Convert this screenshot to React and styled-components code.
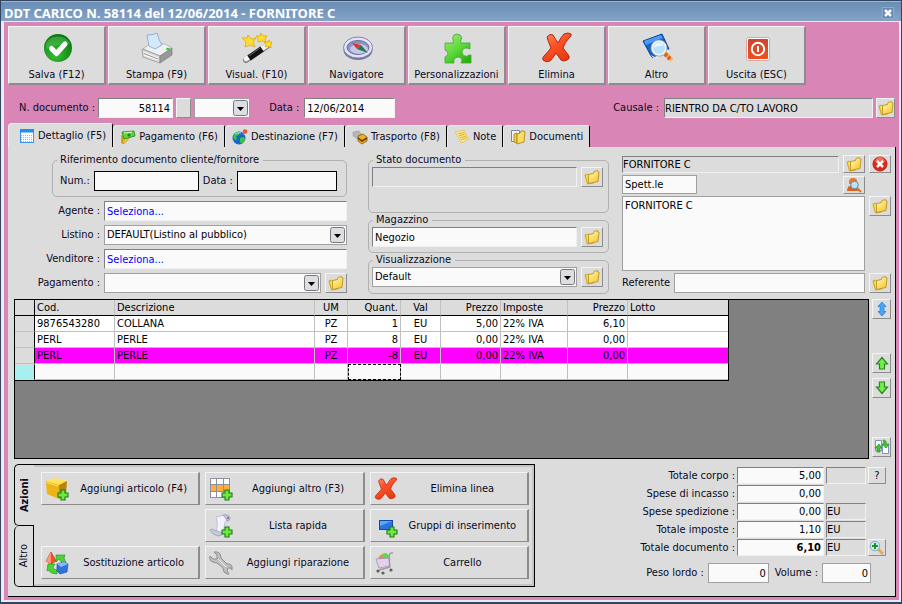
import React, { useState } from "react";
import styled, { createGlobalStyle, css } from "styled-components";

const font = '"DejaVu Sans Condensed", "DejaVu Sans", Verdana, sans-serif';

const GlobalStyle = createGlobalStyle`
  * {
    box-sizing: border-box;
  }
  body {
    margin: 0;
    background: #dcdcdc;
    color: #0a0a1e;
    font: 11px/14px ${font};
  }
  button, input, select, textarea {
    margin: 0;
    color: inherit;
    font: inherit;
  }
`;

/* ---------- icons ---------- */

const CheckIcon = () => (
  <svg width="32" height="32" viewBox="0 0 32 32">
    <defs>
      <radialGradient id="chk" cx=".4" cy=".75" r=".8">
        <stop offset="0" stopColor="#35c235" />
        <stop offset="1" stopColor="#08700f" />
      </radialGradient>
    </defs>
    <circle cx="17" cy="16" r="14" fill="url(#chk)" />
    <path d="M5 12a13 12 0 0 1 24 0q-12 0-24 5z" fill="#6cd06c" opacity=".4" />
    <path
      d="M10.500 16.500l5 5L24 12"
      fill="none"
      stroke="#fff"
      strokeWidth="5"
      strokeLinecap="round"
      strokeLinejoin="round"
    />
  </svg>
);

const PrinterIcon = () => (
  <svg width="32" height="32" viewBox="0 0 32 32">
    <path d="M2 17l8-6 14 1 7 4-12 8z" fill="#f0f0f0" stroke="#a0a0a0" strokeWidth=".7" />
    <path d="M8 14L6 3q7 0 10-2 2 8 5 12l-7 4z" fill="#d5e9fb" stroke="#7aa5d0" strokeWidth=".8" />
    <path d="M1 17l18 7v7L2 25z" fill="#dcdcde" stroke="#8c8c8c" strokeWidth=".7" />
    <path d="M19 24l12-8v7l-12 8z" fill="#98989c" stroke="#808080" strokeWidth=".7" />
    <path d="M3 20.500l14 5.500M3 23l14 5" stroke="#fff" />
    <path d="M3 21.500l14 5.500" stroke="#777" strokeWidth=".7" />
    <ellipse cx="27" cy="17" rx="2" ry="1.300" fill="#3cd03c" />
  </svg>
);

const WandIcon = () => (
  <svg width="32" height="32" viewBox="0 0 32 32">
    <path d="M5 28L26 14" stroke="#888" strokeWidth="6" strokeLinecap="round" />
    <path d="M5 27L25 14" stroke="#f4f4f4" strokeWidth="4.500" strokeLinecap="round" />
    <path d="M8 26L21 17" stroke="#111" strokeWidth="6" />
    <path d="M8 24l11-8" stroke="#666" />
    <g fill="#ffdc32" stroke="#d8a010" strokeWidth=".7">
      <path d="M7 3l3 4 5-1-3 4 2 5-5-2-5 2 1-5-4-4 5 0z" />
      <path d="M20 1l2 3 4 0-2 3 1 3-4-1-4 1 0-3-2-3 4 0z" />
      <path d="M28 8l1 2 2 0-1 3 0 3-3-2-3 1 1-3-2-2 4 0z" />
    </g>
  </svg>
);

const CompassIcon = () => (
  <svg width="32" height="32" viewBox="0 0 32 32">
    <ellipse cx="17" cy="18" rx="14.500" ry="10" fill="#74749f" />
    <ellipse cx="17" cy="15.500" rx="14.500" ry="10.500" fill="#e2e2f8" stroke="#8484b5" />
    <ellipse cx="17" cy="15.500" rx="11" ry="7" fill="#9090bf" stroke="#6e6ea0" />
    <ellipse cx="18" cy="17" rx="9" ry="5" fill="#c6c6e8" />
    <path d="M11 11l9 2-4 4z" fill="#e03424" />
    <path d="M20 13l7 8-11-4z" fill="#1c7a50" />
  </svg>
);

const PuzzleIcon = () => (
  <svg width="32" height="32" viewBox="0 0 32 32">
    <defs>
      <linearGradient id="pz" x1="0" y1="0" x2=".7" y2="1">
        <stop offset="0" stopColor="#a2ec78" />
        <stop offset=".6" stopColor="#58d838" />
        <stop offset="1" stopColor="#2db010" />
      </linearGradient>
    </defs>
    <path
      d="M4 11h8q1-1 0-3-1-3 1-5 3-2 6 0 3 2 1 5-1 2 0 3h9v6q-2-1-5-1-3 1-3 4t3 4q2 1 4-1h2v8H20q2-3 0-5-3-2-6 0-2 2-1 5H4v-6q2-1 3-3 0-3-3-4z"
      fill="url(#pz)"
      stroke="#42a82b"
      strokeWidth=".8"
      strokeLinejoin="round"
    />
  </svg>
);

const CrossIcon = ({ size = 32 }) => (
  <svg width={size} height={size} viewBox="0 0 32 32">
    <defs>
      <linearGradient id="crs" x1="0" y1="0" x2=".6" y2="1">
        <stop offset="0" stopColor="#ff8f68" />
        <stop offset=".5" stopColor="#fc5028" />
        <stop offset="1" stopColor="#e83c10" />
      </linearGradient>
    </defs>
    <path
      d="M6 5q3-4 6-2 3 5 5 8 3-6 6-9 4-2 7 0 1 2-2 4-4 4-6 10 4 5 6 8 1 3-2 4-4 2-6 0l-5-7q-3 5-6 8-4 2-7-1-1-2 1-4 4-4 7-8Q7 9 6 5z"
      fill="url(#crs)"
      stroke="#b92408"
      strokeLinejoin="round"
    />
  </svg>
);

const BookIcon = () => (
  <svg width="32" height="32" viewBox="0 0 32 32">
    <path d="M2 9L21 2l7 15-14 9q-4 0-5-4z" fill="#1565d0" stroke="#0a3f96" />
    <path d="M3 9L20 3l2 3L5 13z" fill="#4a9cf5" />
    <path d="M9 23l5 2 13-8 1 2-14 8z" fill="#f0f0f0" />
    <path d="M23 20l8 8" stroke="#f5b060" strokeWidth="4" />
    <path d="M24 22l2 2M27 25l2 2" stroke="#d86020" strokeWidth="4" />
    <circle cx="18" cy="16" r="7" fill="#b6e0fb" stroke="#f2f2f2" strokeWidth="2" />
    <circle cx="18" cy="16" r="8.200" fill="none" stroke="#7a8a9a" strokeWidth=".7" />
    <path d="M13 16q0-5 5-5 4 0 4 3-5-1-9 2z" fill="#fff" opacity=".7" />
  </svg>
);

const PowerIcon = () => (
  <svg width="32" height="32" viewBox="0 0 32 32">
    <defs>
      <linearGradient id="pw" x1="0" y1="0" x2="0" y2="1">
        <stop offset="0" stopColor="#cc4432" />
        <stop offset="1" stopColor="#f0501c" />
      </linearGradient>
    </defs>
    <rect x="5.500" y="5.500" width="23" height="23" rx="2" fill="#fff" stroke="#d8a8a0" />
    <rect x="7" y="7" width="20" height="20" rx="1" fill="url(#pw)" />
    <circle cx="17" cy="17" r="6.200" fill="none" stroke="#fff" strokeWidth="2" />
    <path d="M17 14v6" stroke="#fff" strokeWidth="2" />
  </svg>
);

const FolderIcon = () => (
  <svg width="16" height="16" viewBox="0 0 16 16">
    <defs>
      <linearGradient id="fld" x1="0" y1="0" x2=".8" y2="1">
        <stop offset="0" stopColor="#fffac0" />
        <stop offset="1" stopColor="#f4c828" />
      </linearGradient>
    </defs>
    <path d="M1 6l2.500-1 1 1 5-1v9l-6 1z" fill="#f7dc50" stroke="#c89a1c" strokeWidth=".9" />
    <path d="M4.500 5.500l5-1 .5-2 3.500-1 .5 1.500 1 0-1 9.500-9.500 2z" fill="url(#fld)" stroke="#c2921a" strokeWidth=".9" />
  </svg>
);

const RedXIcon = () => (
  <svg width="16" height="16" viewBox="0 0 16 16">
    <circle cx="8" cy="8" r="7" fill="#e0281a" stroke="#b82010" />
    <path d="M3 6a5 5 0 0 1 10 0q-5-1-10 0z" fill="#ff8a70" opacity=".7" />
    <path d="M5 5l6 6M11 5l-6 6" stroke="#fff" strokeWidth="2.500" />
  </svg>
);

const UserSearchIcon = () => (
  <svg width="16" height="16" viewBox="0 0 16 16">
    <path d="M3 5q0-4 4-4t4 3v3H3z" fill="#e67828" />
    <path d="M1 14q0-6 6-6 5 0 6 6z" fill="#df5f1f" />
    <path d="M11 11l4 4" stroke="#d07828" strokeWidth="2" />
    <circle cx="8.500" cy="8" r="3.800" fill="#b8e2fa" stroke="#5a8fb4" />
  </svg>
);

const CalendarIcon = () => (
  <svg width="16" height="16" viewBox="0 0 16 16">
    <rect x="1.500" y="1.500" width="13" height="13" fill="#fff" stroke="#3a94ee" />
    <path d="M1 1h14v3.500H1z" fill="#1e8df5" />
    <path d="M2 7.500h12M2 9.500h12M2 11.500h12M2 13.500h12" stroke="#9cb2e0" strokeDasharray="1 1" />
  </svg>
);

const MoneyIcon = () => (
  <svg width="16" height="16" viewBox="0 0 16 16">
    <path d="M1 6l3 1-1 8-2-1z" fill="#e8a020" />
    <path d="M3 7l7 1-4 5-3 2z" fill="#f5c52a" stroke="#b07a10" strokeWidth=".5" />
    <path d="M2 3l12-1 1 5-11 3z" fill="#5fd53e" stroke="#1b8a1b" strokeWidth=".8" />
    <path d="M4 4l8-1" stroke="#d5ffc0" />
    <circle cx="9" cy="6" r="1.500" fill="#178a20" />
  </svg>
);

const GlobeIcon = () => (
  <svg width="16" height="16" viewBox="0 0 16 16">
    <circle cx="7" cy="9" r="6.500" fill="#1768cc" />
    <path d="M2 6q3-4 6-3l-1 3-3 1 1 3-2 1-2-3zM8 9l4-1 1 3-3 4-2-2z" fill="#3cc43c" />
    <path d="M3 5q3-2 6-1" stroke="#9ae0f5" fill="none" />
    <path d="M11 6l2-3" stroke="#888" />
    <circle cx="13" cy="2.500" r="2.300" fill="#f0502e" />
  </svg>
);

const TransportIcon = () => (
  <svg width="16" height="16" viewBox="0 0 16 16">
    <path d="M1 3l6-1 3 4-4 4-5-3z" fill="#b5b5b5" stroke="#999" strokeWidth=".5" />
    <path d="M6 7l5-2 4 3v4l-5 3-4-3z" fill="#f7ac1c" stroke="#6b4a10" strokeWidth=".7" />
    <path d="M6 9l4 3 5-3" stroke="#5a4010" strokeWidth="1.500" fill="none" />
  </svg>
);

const NoteIcon = () => (
  <svg width="16" height="16" viewBox="0 0 16 16">
    <path d="M1 3l9-2q2 6 5 9l-8 4q-2-6-6-11z" fill="#fbe88c" stroke="#e0bc50" strokeWidth=".7" />
    <path d="M4 5l6-1.500M5 7l6-2M6 9l6-2M7 11l6-2.500" stroke="#cfa030" strokeWidth=".8" />
  </svg>
);

const DocsIcon = () => (
  <svg width="16" height="16" viewBox="0 0 16 16">
    <path d="M1.500 1.500h8v11h-8z" fill="#eef2fa" stroke="#7888a8" />
    <path d="M4 5l3-1v10l-3-1z" fill="#f5d040" stroke="#a87c10" strokeWidth=".8" />
    <path d="M7 5l3-1 1-2 3 0 1 1-1 10-7 2z" fill="#f8de60" stroke="#a87c10" strokeWidth=".8" />
  </svg>
);

const ArrowIcon = ({ down }) => (
  <svg width="16" height="16" viewBox="0 0 16 16">
    <path
      d={down ? "M5.500 2h5v5h3L8 13.500 2.500 7h3z" : "M5.500 14h5V9h3L8 2.500 2.500 9h3z"}
      fill="#74ee48"
      stroke="#238a1b"
      strokeWidth="1.200"
    />
  </svg>
);

const UpDownIcon = () => (
  <svg width="16" height="16" viewBox="0 0 16 16">
    <path d="M8 1l4 4.500H10v5h2L8 15l-4-4.500h2v-5H4z" fill="#4aa6f5" stroke="#2f80d8" strokeWidth=".8" />
  </svg>
);

const RefreshIcon = () => (
  <svg width="16" height="16" viewBox="0 0 16 16">
    <path d="M1.500 1.500h6v10h-6zM8.500 5.500h6v9h-6z" fill="#fff" stroke="#7d93c4" />
    <path d="M3 13V9H1l4-4 3 4H6v4z" fill="#3ccc2c" stroke="#1b7e18" strokeWidth=".6" />
    <path d="M9 1q4 0 3 4h3l-3 4-4-4h2q0-2-1-4z" fill="#3ccc2c" stroke="#1b7e18" strokeWidth=".6" />
  </svg>
);

const ZoomIcon = () => (
  <svg width="16" height="16" viewBox="0 0 16 16">
    <path d="M9 9l5 5" stroke="#e8a858" strokeWidth="3" />
    <circle cx="6" cy="6" r="4.700" fill="#cfeaf8" stroke="#85aac4" />
    <path d="M6 3v6M3 6h6" stroke="#149a24" strokeWidth="2" />
  </svg>
);

const Plus = () => (
  <path
    d="M16 13h4v3h3v4h-3v3h-4v-3h-3v-4h3z"
    fill="#6fe83c"
    stroke="#1a7a18"
    strokeWidth="1.100"
  />
);

const BoxIcon = () => (
  <svg width="24" height="24" viewBox="0 0 24 24">
    <path d="M1 4l10-3 11 3-8 5z" fill="#ffe35a" />
    <path d="M1 4l13 4v14L2 17z" fill="#ecb414" />
    <path d="M14 8l8-4-1 13-7 5z" fill="#bd8404" />
    <path d="M2 5.500l11 3.500" stroke="#ffec90" />
    <Plus />
  </svg>
);

const TableIcon = () => (
  <svg width="24" height="24" viewBox="0 0 24 24">
    <path d="M1 1h19v19H1z" fill="#fff" />
    <path d="M1 7h19v7H1z" fill="#ffad3d" />
    <path
      d="M1.500 1.500h19v19h-19zM7.500 1.500v19M14.500 1.500v19M1.500 7.500h19M1.500 14.500h19"
      fill="none"
      stroke="#8f8fa0"
    />
    <Plus />
  </svg>
);

const ScrollIcon = () => (
  <svg width="24" height="24" viewBox="0 0 24 24">
    <path d="M7 3l9-2q4 2 2 5l-2 2-2 12-8 0q4-8 1-17z" fill="#f2f2fd" stroke="#b0b0c8" strokeWidth=".7" />
    <path d="M14 1q6-1 7 3 0 3-3 3-1-3-4-6z" fill="#c4c4dc" stroke="#9090b0" strokeWidth=".7" />
    <path d="M1 16q2-2 4 0l9 3q-1 3-5 3-6-1-8-6z" fill="#c9c9dd" stroke="#9494b0" strokeWidth=".7" />
    <circle cx="19" cy="4" r="1.200" fill="#8080a5" />
    <Plus />
  </svg>
);

const GroupIcon = () => (
  <svg width="24" height="24" viewBox="0 0 24 24">
    <rect x="5.500" y="6.500" width="13" height="9" fill="#2a74dc" stroke="#1648a0" />
    <path d="M6 7h12L6 12z" fill="#5da5f5" />
    <Plus />
  </svg>
);

const SwapIcon = () => (
  <svg width="24" height="24" viewBox="0 0 24 24">
    <path d="M6 1l5 9-5 3-5-3z" fill="#f0502a" stroke="#b02c10" strokeWidth=".6" />
    <path d="M6 1l-5 9 5 3z" fill="#ff9878" />
    <path d="M11 4h9l-1 3 2 5h-4l-3-4-3 3z" fill="#4cd436" stroke="#1c8a18" strokeWidth=".6" />
    <path d="M3 13l7 0-2 3q0 3 4 3v4q-6 0-9-4l-1 1z" fill="#4cd436" stroke="#1c8a18" strokeWidth=".6" />
    <path d="M12 13l7-2 4 2-1 8-7 2-3-3z" fill="#2f74d8" stroke="#1648a0" strokeWidth=".6" />
    <path d="M12 13l7-2 4 2-7 3z" fill="#8abaf8" />
  </svg>
);

const WrenchIcon = () => (
  <svg width="24" height="24" viewBox="0 0 24 24">
    <path
      d="M5 1l3 3 0 4-4 0-3-3q-1 5 3 6l4 1 6 5q0 5 4 6l2 0-2-3 1-3 3 0 1 2 0-4q-2-3-5-2l-6-6q0-7-7-6z"
      fill="#c0c0c0"
      stroke="#8e8e8e"
      strokeLinejoin="round"
    />
    <path d="M9 8l8 8" stroke="#ededed" />
  </svg>
);

const CartIcon = () => (
  <svg width="24" height="24" viewBox="0 0 24 24">
    <path d="M5 7q2-5 7-5l4 3-1 4H6z" fill="#64d84a" />
    <circle cx="7" cy="7" r="2.500" fill="#f08a40" />
    <path d="M2 8l14-1-1 8-10 2z" fill="#dcd4f4" stroke="#9a92c0" strokeWidth=".8" />
    <path d="M6 9v7M9 9v7M12 8v7" stroke="#f6c8d0" />
    <path d="M19 2q-4-1-4 5l1 9-11 3" fill="none" stroke="#9a9a9a" strokeWidth="1.300" />
    <g fill="#606060">
      <circle cx="4" cy="20" r="1.600" />
      <circle cx="9" cy="22" r="1.600" />
      <circle cx="17" cy="19" r="1.600" />
    </g>
  </svg>
);

/* ---------- shared controls ---------- */

const raised = css`
  border: 1px solid;
  border-color: #f4f4f4 #8c8c8c #8c8c8c #f4f4f4;
  background: #dcdcdc;
`;

const Button = styled.button`
  ${raised}
  padding: 0;
  &:active {
    border-color: #8c8c8c #f4f4f4 #f4f4f4 #8c8c8c;
  }
`;

const IconButton = styled(Button)`
  display: flex;
  flex: none;
  align-items: center;
  justify-content: center;
  width: ${(pr) => pr.$w || 22}px;
  height: ${(pr) => pr.$h || 20}px;
  svg {
    flex: none;
  }
`;

const looks = {
  sunken: "#808080 #f0f0f0 #f0f0f0 #808080",
  flat: "#a0a0a0",
  black: "#000",
};

const Field = styled.input`
  width: ${(pr) => (pr.$w ? pr.$w + "px" : "100%")};
  flex: ${(pr) => (pr.$w ? "none" : "1")};
  min-width: 0;
  height: ${(pr) => pr.$h || 20}px;
  padding: 0 ${(pr) => (pr.readOnly ? 0 : 2)}px;
  border: 1px solid;
  border-color: ${(pr) => looks[pr.$look || "sunken"]};
  border-radius: 0;
  background: ${(pr) => (pr.readOnly ? "#dcdcdc" : "#fafafa")};
  color: ${(pr) => (pr.$link ? "#0000ff" : "#000")};
  font-weight: ${(pr) => (pr.$bold ? "bold" : "normal")};
  text-align: ${(pr) => (pr.$right ? "right" : "left")};
  outline: none;
`;

const SelectBox = styled.div`
  position: relative;
  flex: ${(pr) => (pr.$w ? "none" : "1")};
  width: ${(pr) => (pr.$w ? pr.$w + "px" : "auto")};
  min-width: 0;
  height: 20px;
  select {
    width: 100%;
    height: 100%;
    padding: 0 20px 0 2px;
    border: 1px solid #a0a0a0;
    border-radius: 0;
    background: #fafafa;
    color: #000;
    appearance: none;
  }
  svg {
    position: absolute;
    top: 2px;
    right: 2px;
    pointer-events: none;
  }
`;

const Select = ({ w, label, id, options }) => (
  <SelectBox $w={w}>
    <select id={id} aria-label={label}>
      {options.map((o) => (
        <option key={o}>{o}</option>
      ))}
    </select>
    <svg width="15" height="16" viewBox="0 0 15 16">
      <rect x=".5" y=".5" width="14" height="15" rx="2" fill="#dedee2" stroke="#77777c" />
      <path d="M4 7h7l-3.500 4z" fill="#000" />
    </svg>
  </SelectBox>
);

const FolderButton = (props) => (
  <IconButton aria-label="Apri" {...props}>
    <FolderIcon />
  </IconButton>
);

/* ---------- window ---------- */

const Window = styled.div`
  display: flex;
  flex-direction: column;
  min-width: 880px;
  min-height: 100vh;
  border: 1px solid #34465f;
  border-bottom-width: 2px;
  background: #e8ecf2;
`;

const TitleBar = styled.header`
  display: flex;
  align-items: center;
  justify-content: space-between;
  height: 20px;
  padding: 2px 7px 0 3px;
  border-top: 1px solid #9db6d3;
  background: linear-gradient(#6a8db4, #84a3c7);
  color: #fff;
  h1 {
    margin: 0;
    font: bold 13px/16px "Noto Sans", ${font};
  }
  button {
    display: flex;
    padding: 1px;
    border: 1px solid #8fabc9;
    background: #6488b1;
  }
`;

const Frame = styled.main`
  display: flex;
  flex: 1;
  flex-direction: column;
  margin: 1px 2px 2px 3px;
  padding: 4px 3px 3px 4px;
  background: #d985b5;
`;

const Toolbar = styled.nav`
  display: flex;
  gap: 2px;
`;

const ToolButton = styled(Button)`
  display: flex;
  flex: 0 1 98px;
  flex-direction: column;
  align-items: center;
  justify-content: space-between;
  height: 59px;
  padding: 5px 0 1px;
  border-width: 1px 2px 2px 1px;
  white-space: nowrap;
`;

const DocRow = styled.div`
  display: flex;
  align-items: center;
  gap: 3px;
  margin: 13px 0 5px;
  padding: 0 1px 0 11px;
  label:not(:first-child) {
    margin: 0 2px 0 16px;
  }
  label:nth-last-of-type(1) {
    margin-left: auto;
  }
`;

const Tabs = styled.div`
  display: flex;
  align-items: flex-end;
`;

const Tab = styled.button`
  display: flex;
  align-items: center;
  gap: 3px;
  height: ${(pr) => (pr.$active ? 24 : 22)}px;
  padding: 0 ${(pr) => (pr.$active ? "6px 0 10px" : "6px 0 6px")};
  border: 1px solid;
  border-color: #ececec #000 #dcdcdc #ececec;
  border-width: 1px 1px 0 1px;
  border-radius: 4px 2px 0 0;
  background: #dcdcdc;
  white-space: nowrap;
`;

const Panel = styled.section`
  display: flex;
  flex: 1;
  flex-direction: column;
  padding: 6px 4px 9px 6px;
  border-right: 1px solid #000;
  border-bottom: 1px solid #000;
  background: #dcdcdc;
`;

const FormArea = styled.div`
  display: grid;
  grid-template-columns: 333fr 249fr 269fr;
  gap: 13px;
`;

const LeftColumn = styled.div`
  display: flex;
  flex-direction: column;
  gap: 4px;
`;

const MidColumn = styled.div`
  padding-left: 8px;
`;

const Group = styled.fieldset`
  min-width: 0;
  margin: 0 0 0 ${(pr) => pr.$indent || 0}px;
  padding: ${(pr) => pr.$top || 0}px 5px ${(pr) => pr.$bottom || 5}px 3px;
  border: 1px solid #b0b0b0;
  border-radius: 5px;
  legend {
    height: 14px;
    margin-left: 1px;
    padding: 0 4px 0 3px;
  }
`;

const Row = styled.div`
  display: flex;
  align-items: center;
  gap: ${(pr) => pr.$gap || 4}px;
  padding: 0 ${(pr) => pr.$pad || 0}px;
`;

const FormRow = styled(Row)`
  label {
    width: 86px;
    text-align: right;
    white-space: nowrap;
  }
`;

const Customer = styled.div`
  display: grid;
  grid-template-columns: minmax(0, 1fr) 22px;
  gap: 2px 4px;
  align-content: start;
  padding-top: 2px;
  textarea {
    width: 100%;
    height: 75px;
    padding: 2px;
    border: 1px solid #a0a0a0;
    background: #fafafa;
    color: #000;
    resize: none;
    outline: none;
    vertical-align: top;
  }
`;

const Spread = styled(Row)`
  justify-content: space-between;
`;

/* ---------- document lines ---------- */

const Lines = styled.div`
  display: flex;
  flex: 1;
  gap: 3px;
  margin-top: 5px;
`;

const GridArea = styled.div`
  flex: 1;
  min-width: 0;
  border: 1px solid #000;
  background: #808080;
`;

const Grid = styled.table`
  table-layout: fixed;
  width: 714px;
  border-right: 1px solid #000;
  border-bottom: 1px solid #000;
  border-spacing: 0;
  th, td {
    height: 16px;
    padding: 0 2px;
    overflow: hidden;
    border-right: 1px solid #c0c0c0;
    border-bottom: 1px solid #c0c0c0;
    color: #000;
    font-weight: normal;
    line-height: 14px;
    white-space: nowrap;
  }
  thead th {
    border-bottom-color: #000;
    background: #dcdcdc;
  }
  th:first-child {
    border-right-color: #000;
    background: #dcdcdc;
  }
  tr > :last-child {
    border-right: 0;
  }
`;

const Line = styled.tr`
  background: ${(pr) => (pr.$marked ? "#ff00ff" : "#fff")};
`;

const NewLine = styled.tr`
  background: #fafafa;
  && th {
    border: 1px solid #dcdcdc;
    border-right-color: #000;
    background: #a8f0f0;
  }
  td:nth-child(5) {
    outline: 1px dashed #000;
    outline-offset: -1px;
  }
`;

const Cell = styled.td`
  text-align: ${(pr) => pr.$align || "left"};
`;

const SideButtons = styled.div`
  display: flex;
  flex-direction: column;
  gap: 5px;
  button:nth-child(2) {
    margin-top: 29px;
  }
  button:last-child {
    margin: auto 0 2px;
  }
`;

/* ---------- bottom ---------- */

const Bottom = styled.div`
  display: grid;
  grid-template-columns: 521fr 356fr;
  margin-top: 5px;
`;

const Actions = styled.div`
  display: flex;
  height: 123px;
`;

const SideTabs = styled.div`
  display: flex;
  flex-direction: column;
  width: 20px;
`;

const SideTab = styled.button`
  display: flex;
  flex: 1;
  align-items: center;
  justify-content: center;
  padding: 0;
  border: 1px solid #000;
  border-right: ${(pr) => (pr.$active ? 0 : "1px solid #000")};
  border-top-width: ${(pr) => (pr.$active ? 1 : 0)}px;
  border-radius: 5px 0 0 5px;
  background: #dcdcdc;
  font-weight: ${(pr) => (pr.$active ? "bold" : "normal")};
  span {
    writing-mode: vertical-rl;
    transform: rotate(180deg);
  }
`;

const ActionGrid = styled.div`
  display: grid;
  flex: 1;
  grid-template-columns: repeat(3, 1fr);
  grid-template-rows: repeat(3, 33px);
  gap: 4px 5px;
  padding: 7px 5px 0 7px;
  border: 1px solid #000;
  border-left: 0;
  box-shadow: inset -2px -2px 0 #c4c4c4, inset 0 2px 0 #c4c4c4;
`;

const ActionButton = styled(Button)`
  display: flex;
  grid-area: ${(pr) => pr.$area};
  align-items: center;
  padding: 0 0 0 3px;
  border-right-width: 2px;
  white-space: nowrap;
  span {
    flex: 1;
    text-align: center;
  }
`;

const Totals = styled.div`
  display: grid;
  grid-template-columns: 1fr 87px 40px 18px;
  grid-auto-rows: 17px;
  gap: 1px 2px;
  align-content: start;
  align-items: center;
  padding: 3px 5px 0 0;
  label {
    text-align: right;
  }
  button {
    grid-column: 4;
  }
`;

const Weights = styled(Row)`
  grid-column: 1 / -1;
  justify-content: flex-end;
  margin-top: 15px;
  padding-right: 15px;
  label + input + label {
    margin-left: 2px;
  }
`;

const tools = [
  ["Salva (F12)", CheckIcon],
  ["Stampa (F9)", PrinterIcon],
  ["Visual. (F10)", WandIcon],
  ["Navigatore", CompassIcon],
  ["Personalizzazioni", PuzzleIcon],
  ["Elimina", CrossIcon],
  ["Altro", BookIcon],
  ["Uscita (ESC)", PowerIcon],
];

const tabs = [
  ["Dettaglio (F5)", CalendarIcon],
  ["Pagamento (F6)", MoneyIcon],
  ["Destinazione (F7)", GlobeIcon],
  ["Trasporto (F8)", TransportIcon],
  ["Note", NoteIcon],
  ["Documenti", DocsIcon],
];

const columns = [
  { name: "Cod.", width: 80 },
  { name: "Descrizione", width: 200 },
  { name: "UM", width: 33, align: "center" },
  { name: "Quant.", width: 53, align: "right" },
  { name: "Val", width: 40, align: "center" },
  { name: "Prezzo", width: 60, align: "right" },
  { name: "Imposte", width: 67 },
  { name: "Prezzo", width: 60, align: "right" },
  { name: "Lotto", width: 100 },
];

const lines = [
  ["9876543280", "COLLANA", "PZ", "1", "EU", "5,00", "22% IVA", "6,10", ""],
  ["PERL", "PERLE", "PZ", "8", "EU", "0,00", "22% IVA", "0,00", ""],
  ["PERL", "PERLE", "PZ", "-8", "EU", "0,00", "22% IVA", "0,00", ""],
];

const actions = [
  ["Aggiungi articolo (F4)", BoxIcon, "1 / 1"],
  ["Aggiungi altro (F3)", TableIcon, "1 / 2"],
  ["Elimina linea", CrossIcon, "1 / 3"],
  ["Lista rapida", ScrollIcon, "2 / 2"],
  ["Gruppi di inserimento", GroupIcon, "2 / 3"],
  ["Sostituzione articolo", SwapIcon, "3 / 1"],
  ["Aggiungi riparazione", WrenchIcon, "3 / 2"],
  ["Carrello", CartIcon, "3 / 3"],
];

const totals = [
  { id: "corpo", label: "Totale corpo :", value: "5,00", unit: "" },
  { id: "incasso", label: "Spese di incasso :", value: "0,00" },
  { id: "spedizione", label: "Spese spedizione :", value: "0,00", unit: "EU" },
  { id: "imposte", label: "Totale imposte :", value: "1,10", unit: "EU" },
  { id: "documento", label: "Totale documento :", value: "6,10", unit: "EU", bold: true },
];

const LinesGrid = () => (
  <Grid>
    <colgroup>
      <col style={{ width: 20 }} />
      {columns.map((c, i) => (
        <col key={i} style={{ width: c.width }} />
      ))}
    </colgroup>
    <thead>
      <tr>
        <th />
        {columns.map((c, i) => (
          <Cell as="th" key={i} $align={c.align}>
            {c.name}
          </Cell>
        ))}
      </tr>
    </thead>
    <tbody>
      {lines.map((line, i) => (
        <Line key={i} $marked={line[3] === "-8"}>
          <th />
          {line.map((value, j) => (
            <Cell key={j} $align={columns[j].align}>
              {value}
            </Cell>
          ))}
        </Line>
      ))}
      <NewLine>
        <th />
        {columns.map((c, i) => (
          <td key={i} />
        ))}
      </NewLine>
    </tbody>
  </Grid>
);

const App = () => {
  const [tab, setTab] = useState(0);
  const [side, setSide] = useState("Azioni");

  return (
    <Window>
      <GlobalStyle />
      <TitleBar>
        <h1>DDT CARICO N. 58114 del 12/06/2014 - FORNITORE C</h1>
        <button aria-label="Chiudi">
          <svg width="8" height="8" viewBox="0 0 8 8">
            <path d="M1 1l6 6M7 1l-6 6" stroke="#fff" strokeWidth="2.500" />
          </svg>
        </button>
      </TitleBar>
      <Frame>
        <Toolbar>
          {tools.map(([label, Icon]) => (
            <ToolButton key={label}>
              <Icon />
              {label}
            </ToolButton>
          ))}
        </Toolbar>

        <DocRow>
          <label htmlFor="numero">N. documento :</label>
          <Field id="numero" $w={75} $right defaultValue="58114" />
          <IconButton $w={15} aria-label="Numero" />
          <Select w={56} label="Serie" options={[""]} />
          <label htmlFor="data">Data :</label>
          <Field id="data" $w={91} defaultValue="12/06/2014" />
          <label htmlFor="causale">Causale :</label>
          <Field id="causale" $w={209} readOnly value="RIENTRO DA C/TO LAVORO" />
          <FolderButton $w={19} />
        </DocRow>

        <Tabs>
          {tabs.map(([label, Icon], i) => (
            <Tab key={label} $active={i === tab} onClick={() => setTab(i)}>
              <Icon />
              {label}
            </Tab>
          ))}
        </Tabs>

        <Panel>
          <FormArea>
            <LeftColumn>
              <Group $indent={38} $top={4}>
                <legend>Riferimento documento cliente/fornitore</legend>
                <Row $pad={4}>
                  <label htmlFor="rifNum">Num.:</label>
                  <Field id="rifNum" $w={105} $look="black" />
                  <label htmlFor="rifData">Data :</label>
                  <Field id="rifData" $look="black" />
                </Row>
              </Group>
              <FormRow>
                <label htmlFor="agente">Agente :</label>
                <Field id="agente" $link defaultValue="Seleziona..." />
              </FormRow>
              <FormRow>
                <label htmlFor="listino">Listino :</label>
                <Select id="listino" options={["DEFAULT(Listino al pubblico)"]} />
              </FormRow>
              <FormRow>
                <label htmlFor="venditore">Venditore :</label>
                <Field id="venditore" $link defaultValue="Seleziona..." />
              </FormRow>
              <FormRow>
                <label htmlFor="pagamento">Pagamento :</label>
                <Select id="pagamento" options={[""]} />
                <FolderButton />
              </FormRow>
            </LeftColumn>

            <MidColumn>
              <Group $bottom={25}>
                <legend>Stato documento</legend>
                <Row>
                  <Field readOnly value="" aria-label="Stato documento" />
                  <FolderButton />
                </Row>
              </Group>
              <Group>
                <legend>Magazzino</legend>
                <Row>
                  <Field defaultValue="Negozio" aria-label="Magazzino" />
                  <FolderButton />
                </Row>
              </Group>
              <Group $bottom={6}>
                <legend>Visualizzazione</legend>
                <Row>
                  <Select label="Visualizzazione" options={["Default"]} />
                  <FolderButton />
                </Row>
              </Group>
            </MidColumn>

            <Customer>
              <Row>
                <Field $h={17} readOnly value="FORNITORE C" aria-label="Fornitore" />
                <FolderButton $h={18} />
              </Row>
              <IconButton $h={18} aria-label="Rimuovi">
                <RedXIcon />
              </IconButton>
              <Spread>
                <Field $w={75} $h={19} $look="flat" defaultValue="Spett.le" aria-label="Titolo" />
                <IconButton $h={18} aria-label="Cerca">
                  <UserSearchIcon />
                </IconButton>
              </Spread>
              <span />
              <textarea defaultValue="FORNITORE C" aria-label="Indirizzo" />
              <FolderButton />
              <Row>
                <label htmlFor="referente">Referente</label>
                <Field id="referente" $look="flat" />
              </Row>
              <FolderButton />
            </Customer>
          </FormArea>

          <Lines>
            <GridArea>
              <LinesGrid />
            </GridArea>
            <SideButtons>
              <IconButton $w={19} aria-label="Ordina">
                <UpDownIcon />
              </IconButton>
              <IconButton $w={19} aria-label="Su">
                <ArrowIcon />
              </IconButton>
              <IconButton $w={19} aria-label="Giù">
                <ArrowIcon down />
              </IconButton>
              <IconButton $w={19} aria-label="Aggiorna">
                <RefreshIcon />
              </IconButton>
            </SideButtons>
          </Lines>

          <Bottom>
            <Actions>
              <SideTabs>
                {["Azioni", "Altro"].map((name) => (
                  <SideTab key={name} $active={name === side} onClick={() => setSide(name)}>
                    <span>{name}</span>
                  </SideTab>
                ))}
              </SideTabs>
              <ActionGrid>
                {actions.map(([label, Icon, area]) => (
                  <ActionButton key={label} $area={area}>
                    <Icon size={24} />
                    <span>{label}</span>
                  </ActionButton>
                ))}
              </ActionGrid>
            </Actions>

            <Totals>
              {totals.map((t) => (
                <React.Fragment key={t.id}>
                  <label htmlFor={t.id}>{t.label}</label>
                  <Field id={t.id} $h={17} $right $bold={t.bold} defaultValue={t.value} />
                  {t.unit === undefined ? (
                    <span />
                  ) : (
                    <Field $h={17} readOnly value={t.unit} aria-label="Valuta" />
                  )}
                  {t.id === "corpo" && (
                    <IconButton $w={18} $h={17}>
                      ?
                    </IconButton>
                  )}
                  {t.id === "documento" && (
                    <IconButton $w={18} $h={17} aria-label="Dettaglio totale">
                      <ZoomIcon />
                    </IconButton>
                  )}
                  {t.id !== "corpo" && t.id !== "documento" && <span />}
                </React.Fragment>
              ))}
              <Weights>
                <label htmlFor="peso">Peso lordo :</label>
                <Field id="peso" $w={61} $look="flat" $right defaultValue="0" />
                <label htmlFor="volume">Volume :</label>
                <Field id="volume" $w={49} $look="flat" $right defaultValue="0" />
              </Weights>
            </Totals>
          </Bottom>
        </Panel>
      </Frame>
    </Window>
  );
};

export default App;
